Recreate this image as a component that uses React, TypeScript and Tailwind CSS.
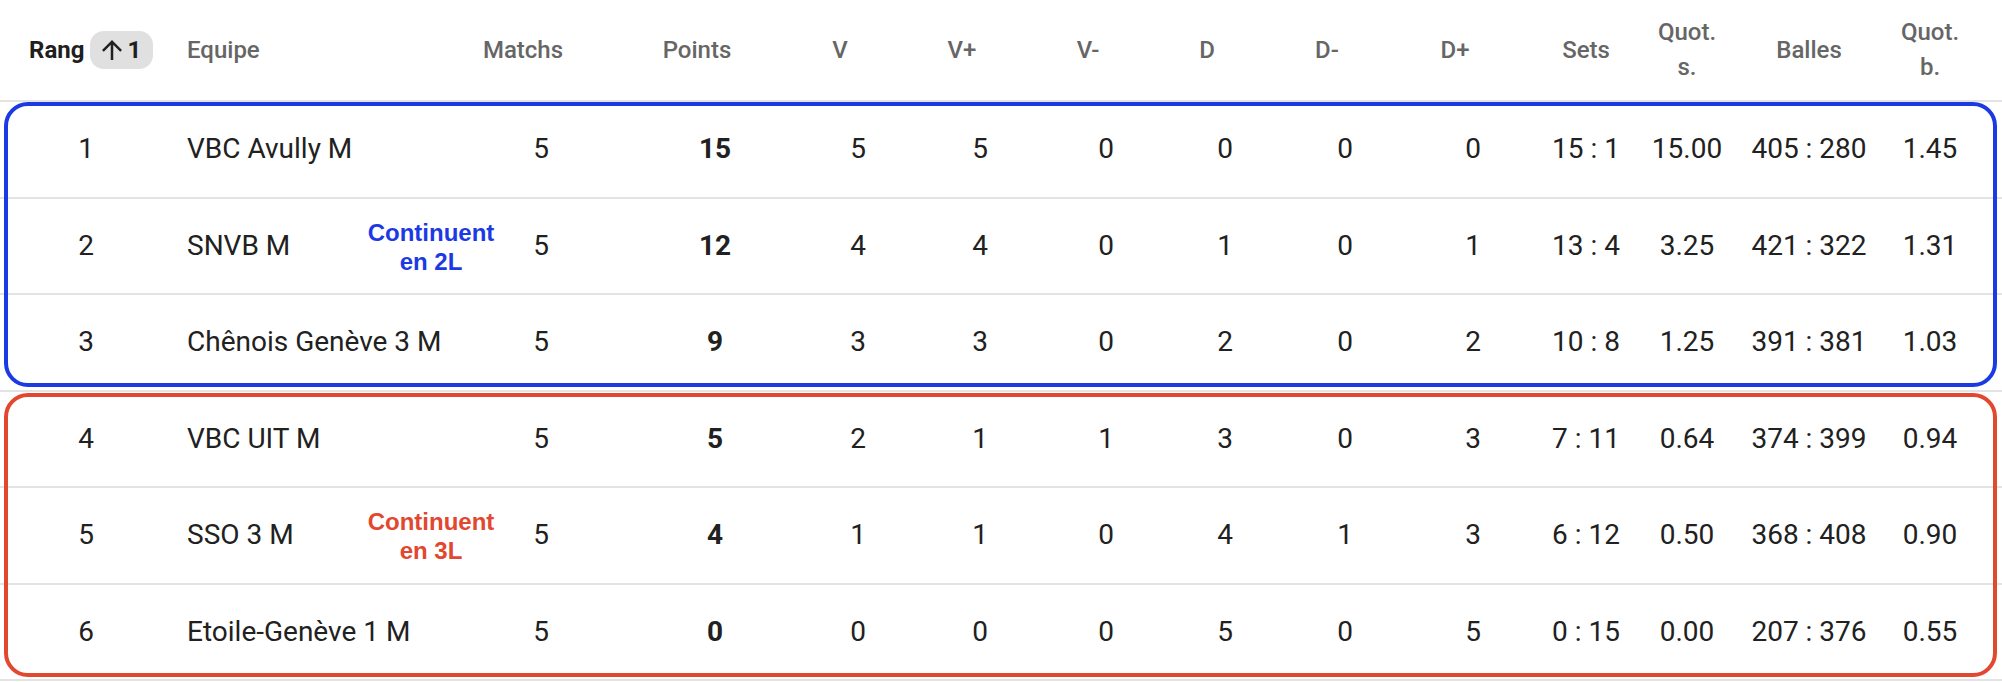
import React from 'react';

const rows = [
  { rank: 1, team: "VBC Avully M", m: 5, pts: 15, v: 5, vp: 5, vm: 0, d: 0, dm: 0, dp: 0, sets: "15 : 1", qs: "15.00", balls: "405 : 280", qb: "1.45" },
  { rank: 2, team: "SNVB M", m: 5, pts: 12, v: 4, vp: 4, vm: 0, d: 1, dm: 0, dp: 1, sets: "13 : 4", qs: "3.25", balls: "421 : 322", qb: "1.31" },
  { rank: 3, team: "Chênois Genève 3 M", m: 5, pts: 9, v: 3, vp: 3, vm: 0, d: 2, dm: 0, dp: 2, sets: "10 : 8", qs: "1.25", balls: "391 : 381", qb: "1.03" },
  { rank: 4, team: "VBC UIT M", m: 5, pts: 5, v: 2, vp: 1, vm: 1, d: 3, dm: 0, dp: 3, sets: "7 : 11", qs: "0.64", balls: "374 : 399", qb: "0.94" },
  { rank: 5, team: "SSO 3 M", m: 5, pts: 4, v: 1, vp: 1, vm: 0, d: 4, dm: 1, dp: 3, sets: "6 : 12", qs: "0.50", balls: "368 : 408", qb: "0.90" },
  { rank: 6, team: "Etoile-Genève 1 M", m: 5, pts: 0, v: 0, vp: 0, vm: 0, d: 5, dm: 0, dp: 5, sets: "0 : 15", qs: "0.00", balls: "207 : 376", qb: "0.55" },
];

type Row = (typeof rows)[number];

const gridCols =
  "grid grid-cols-[172px_282px_174px_174px_112px_132px_120px_118px_122px_134px_92px_110px_134px_108px]";

const sortable = ["Matchs", "Points", "V", "V+", "V-", "D", "D-", "D+"];

const ArrowUp = () => (
  <svg viewBox="0 0 24 24" className="w-[30px] h-[30px] fill-[#1f1f1f]">
    <path d="M4 12l1.41 1.41L11 7.83V20h2V7.83l5.58 5.59L20 12l-8-8-8 8z" />
  </svg>
);

const TableRow = ({ r }: { r: Row }) => (
  <div className={`${gridCols} items-center h-[96.5px] border-b-2 border-[#e3e3e3] text-[28px] text-[#212121]`}>
    <div className="text-center">{r.rank}</div>
    <div className="pl-[15px] whitespace-nowrap">{r.team}</div>
    <div className="text-center">{r.m}</div>
    <div className="text-center font-bold">{r.pts}</div>
    <div className="text-center">{r.v}</div>
    <div className="text-center">{r.vp}</div>
    <div className="text-center">{r.vm}</div>
    <div className="text-center">{r.d}</div>
    <div className="text-center">{r.dm}</div>
    <div className="text-center">{r.dp}</div>
    <div className="text-center whitespace-nowrap">{r.sets}</div>
    <div className="text-center">{r.qs}</div>
    <div className="text-center whitespace-nowrap">{r.balls}</div>
    <div className="text-center">{r.qb}</div>
  </div>
);

const Group = ({
  items,
  frame,
  label,
  labelColor,
}: {
  items: Row[];
  frame: string;
  label: string;
  labelColor: string;
}) => (
  <div className="relative">
    {items.map((r) => (
      <TableRow key={r.rank} r={r} />
    ))}
    {/* coloured frame drawn over the rows */}
    <div className={`pointer-events-none absolute left-[4px] right-[5px] rounded-[24px] border-[4px] ${frame}`}></div>
    <div
      className={`absolute left-[366px] top-1/2 -translate-y-1/2 w-[130px] text-center text-[24px] leading-[29px] font-bold ${labelColor}`}
      style={{ fontFamily: '"Liberation Sans", Arial, sans-serif' }}
    >
      Continuent
      <br />
      {label}
    </div>
  </div>
);

export default function App() {
  return (
    <div className="w-[2002px] h-[682px] bg-white overflow-hidden" style={{ fontFamily: 'Roboto, "Noto Sans", sans-serif' }}>
      <div className={`${gridCols} items-center h-[102px] border-b-2 border-[#e3e3e3] text-[24px] font-medium text-[#666666]`}>
        <div className="flex items-center pl-[29px] gap-[6px]">
          <span className="font-bold text-[#1f1f1f]">Rang</span>
          <span className="flex items-center h-[38px] pl-[7px] pr-[12px] rounded-[14px] bg-[#e0e0e0] font-bold text-[#1f1f1f]">
            <ArrowUp />
            1
          </span>
        </div>
        <div className="pl-[15px]">Equipe</div>
        {sortable.map((h) => (
          <div key={h} className="text-center pr-[36px]">
            {h}
          </div>
        ))}
        <div className="text-center">Sets</div>
        <div className="text-center leading-[35px]">
          Quot.
          <br />
          s.
        </div>
        <div className="text-center">Balles</div>
        <div className="text-center leading-[35px]">
          Quot.
          <br />
          b.
        </div>
      </div>

      <Group items={rows.slice(0, 3)} frame="top-0 bottom-[5px] border-[#1c3ae4]" label="en 2L" labelColor="text-[#1c3ae4]" />
      <Group items={rows.slice(3, 6)} frame="top-[1px] bottom-[4px] border-[#e2472f]" label="en 3L" labelColor="text-[#e2472f]" />
    </div>
  );
}
